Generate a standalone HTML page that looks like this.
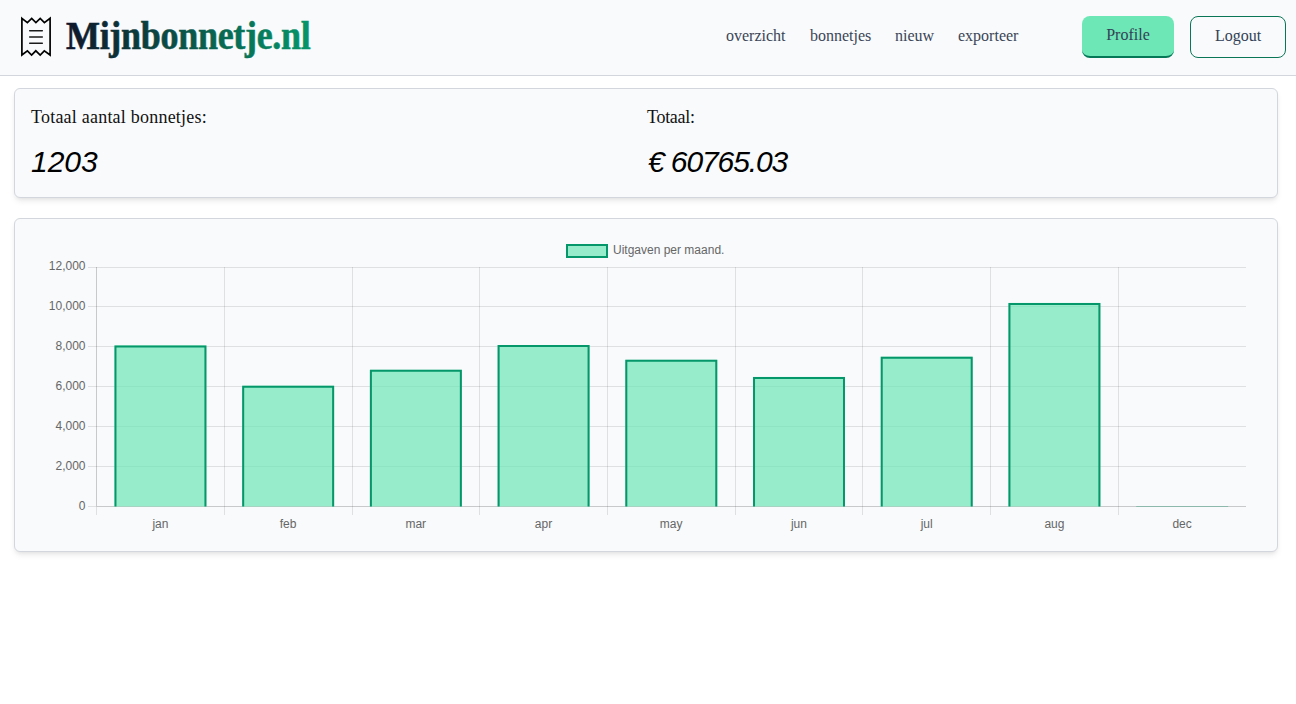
<!DOCTYPE html>
<html>
<head>
<meta charset="utf-8">
<style>
html,body{margin:0;padding:0;}
body{width:1296px;height:704px;background:#ffffff;position:relative;overflow:hidden;font-family:"Liberation Serif",serif;}
.hdr{position:absolute;left:0;top:0;width:1296px;height:75px;background:#f8fafc;border-bottom:1px solid #d3d6dc;}
.logo-icon{position:absolute;left:18px;top:14px;}
.nav{position:absolute;top:26px;font-size:16px;line-height:20px;color:#3b4556;white-space:nowrap;}
.btn{position:absolute;top:16px;height:42px;box-sizing:border-box;border-radius:8px;font-size:16px;color:#334155;text-align:center;white-space:nowrap;}
.profile{left:1082px;width:92px;background:#6ee7b7;border-bottom:2px solid #047857;line-height:38px;}
.logout{left:1190px;width:96px;background:#f8fafc;border:1px solid #0b7656;line-height:38px;}
.card{position:absolute;left:14px;width:1264px;box-sizing:border-box;background:#f8fafc;border:1px solid #d3d6dc;border-radius:6px;box-shadow:0 4px 6px -1px rgba(0,0,0,0.08),0 2px 4px -2px rgba(0,0,0,0.08);}
.c1{top:88px;height:110px;}
.c2{top:218px;height:334px;}
.lbl{position:absolute;top:17px;font-size:18px;line-height:22px;color:#111;white-space:nowrap;}
.num{position:absolute;top:56px;font-family:"Liberation Sans",sans-serif;font-style:italic;font-size:28px;line-height:34px;color:#000;white-space:nowrap;}
.chart text{font-family:"Liberation Sans",sans-serif;font-size:12px;fill:#666;}
</style>
</head>
<body>
<div class="hdr">
  <svg class="logo-icon" width="36" height="46" viewBox="18 14 36 46">
    <path d="M21.9 18.3 L27.4 22.6 L31.7 18.4 L35.9 22.6 L40.2 18.4 L44.4 22.6 L50.1 18.3 L50.1 55 L44.3 50.8 L40.2 55 L35.8 50.8 L31.6 55 L27.4 50.8 L21.9 55 Z" fill="none" stroke="#000" stroke-width="1.7" stroke-linejoin="miter" stroke-miterlimit="3"/>
    <path d="M29.7 30.7 H42.3 M29.7 37 H42.3 M29.7 43.2 H42.3" stroke="#1a1a1a" stroke-width="1.5" stroke-linecap="round"/>
  </svg>
  <svg style="position:absolute;left:0;top:0" width="340" height="75" viewBox="0 0 340 75">
    <defs><linearGradient id="lg" gradientUnits="userSpaceOnUse" x1="1" y1="0" x2="245" y2="0"><stop offset="0" stop-color="#0f172a"/><stop offset="1" stop-color="#059669"/></linearGradient></defs>
    <text transform="translate(66,48.6) scale(1,1.13)" x="0" y="0" font-family="Liberation Serif" font-weight="bold" font-size="36" letter-spacing="-0.3" fill="url(#lg)" stroke="url(#lg)" stroke-width="0.5">Mijnbonnetje.nl</text>
  </svg>
  <div class="nav" style="left:726px">overzicht</div>
  <div class="nav" style="left:810px">bonnetjes</div>
  <div class="nav" style="left:895px">nieuw</div>
  <div class="nav" style="left:958px">exporteer</div>
  <div class="btn profile">Profile</div>
  <div class="btn logout">Logout</div>
</div>

<div class="card c1">
  <div class="lbl" style="left:16px;letter-spacing:0.22px">Totaal aantal bonnetjes:</div>
  <div class="num" style="left:16px;font-size:30px">1203</div>
  <div class="lbl" style="left:632px;letter-spacing:-0.3px">Totaal:</div>
  <div class="num" style="left:633px;font-size:30px;letter-spacing:-1.1px">€ 60765.03</div>
</div>

<div class="card c2"></div>

<svg class="chart" style="position:absolute;left:0;top:0" width="1296" height="704" viewBox="0 0 1296 704">
  <!-- legend -->
  <rect x="567" y="245" width="40" height="12" fill="rgba(110,231,183,0.7)" stroke="#059669" stroke-width="2"/>
  <text x="613" y="253.5">Uitgaven per maand.</text>
  <!-- grid horizontal -->
  <g stroke="rgba(0,0,0,0.1)" stroke-width="1" shape-rendering="crispEdges" fill="none">
    <path d="M88 267.5 H1246 M88 306.5 H1246 M88 346.5 H1246 M88 386.5 H1246 M88 426.5 H1246 M88 466.5 H1246 M88 506.5 H1246"/>
    <path d="M96.5 267 V515 M224.5 267 V515 M352.5 267 V515 M479.5 267 V515 M607.5 267 V515 M735.5 267 V515 M862.5 267 V515 M990.5 267 V515 M1118.5 267 V515"/>
    <path d="M97 506.5 H1246 M96.5 267 V506"/>
  </g>
  <!-- y labels -->
  <g text-anchor="end" transform="translate(-0.5,0)">
    <text x="86" y="270">12,000</text>
    <text x="86" y="310">10,000</text>
    <text x="86" y="350">8,000</text>
    <text x="86" y="390">6,000</text>
    <text x="86" y="430">4,000</text>
    <text x="86" y="470">2,000</text>
    <text x="86" y="510">0</text>
  </g>
  <!-- x labels -->
  <g text-anchor="middle">
    <text x="160.4" y="528">jan</text>
    <text x="288.1" y="528">feb</text>
    <text x="415.8" y="528">mar</text>
    <text x="543.5" y="528">apr</text>
    <text x="671.2" y="528">may</text>
    <text x="798.9" y="528">jun</text>
    <text x="926.7" y="528">jul</text>
    <text x="1054.4" y="528">aug</text>
    <text x="1182.1" y="528">dec</text>
  </g>
  <!-- bars -->
  <g id="bars">
    <rect x="114.48" y="345.40" width="91.95" height="161.10" fill="rgba(110,231,183,0.7)"/>
    <path d="M114.48 506.5 V345.40 H206.43 V506.5 H204.43 V347.40 H116.48 V506.5 Z" fill="#059669" fill-rule="evenodd"/>
    <rect x="242.19" y="385.70" width="91.95" height="120.80" fill="rgba(110,231,183,0.7)"/>
    <path d="M242.19 506.5 V385.70 H334.14 V506.5 H332.14 V387.70 H244.19 V506.5 Z" fill="#059669" fill-rule="evenodd"/>
    <rect x="369.90" y="369.80" width="91.95" height="136.70" fill="rgba(110,231,183,0.7)"/>
    <path d="M369.90 506.5 V369.80 H461.85 V506.5 H459.85 V371.80 H371.90 V506.5 Z" fill="#059669" fill-rule="evenodd"/>
    <rect x="497.61" y="345.10" width="91.95" height="161.40" fill="rgba(110,231,183,0.7)"/>
    <path d="M497.61 506.5 V345.10 H589.56 V506.5 H587.56 V347.10 H499.61 V506.5 Z" fill="#059669" fill-rule="evenodd"/>
    <rect x="625.32" y="359.80" width="91.95" height="146.70" fill="rgba(110,231,183,0.7)"/>
    <path d="M625.32 506.5 V359.80 H717.27 V506.5 H715.27 V361.80 H627.32 V506.5 Z" fill="#059669" fill-rule="evenodd"/>
    <rect x="753.03" y="376.90" width="91.95" height="129.60" fill="rgba(110,231,183,0.7)"/>
    <path d="M753.03 506.5 V376.90 H844.98 V506.5 H842.98 V378.90 H755.03 V506.5 Z" fill="#059669" fill-rule="evenodd"/>
    <rect x="880.74" y="356.70" width="91.95" height="149.80" fill="rgba(110,231,183,0.7)"/>
    <path d="M880.74 506.5 V356.70 H972.69 V506.5 H970.69 V358.70 H882.74 V506.5 Z" fill="#059669" fill-rule="evenodd"/>
    <rect x="1008.45" y="302.90" width="91.95" height="203.60" fill="rgba(110,231,183,0.7)"/>
    <path d="M1008.45 506.5 V302.90 H1100.40 V506.5 H1098.40 V304.90 H1010.45 V506.5 Z" fill="#059669" fill-rule="evenodd"/>
    <rect x="1136.16" y="506" width="91.95" height="1" fill="#059669" opacity="0.3"/>
  </g>
</svg>
</body>
</html>
